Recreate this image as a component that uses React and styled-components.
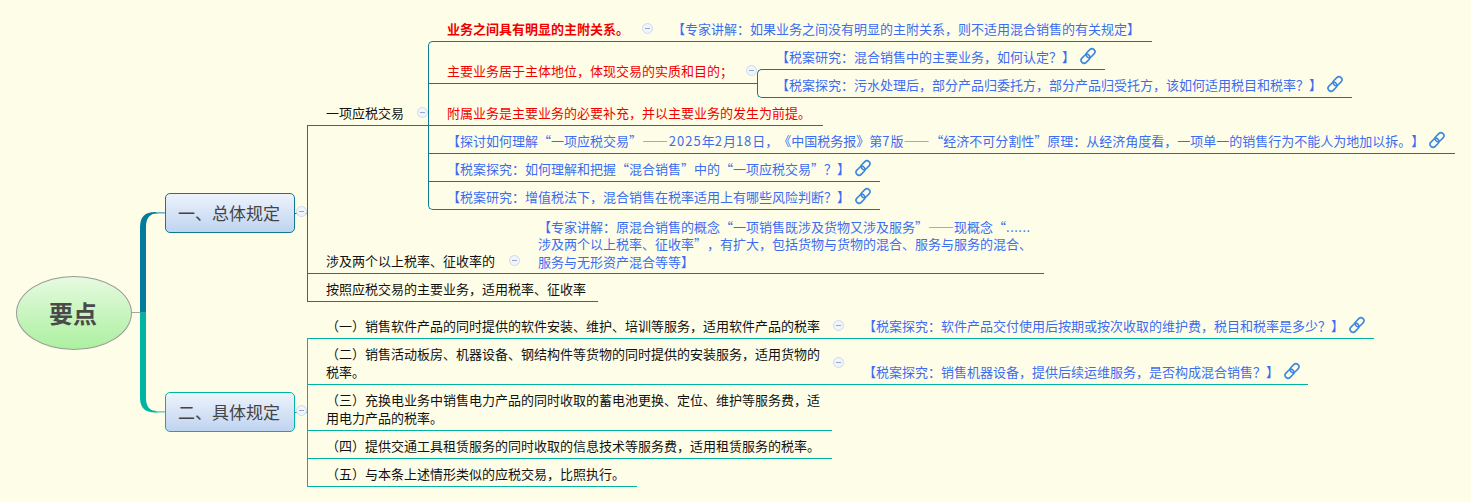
import React from "react";
import styled, { createGlobalStyle } from "styled-components";

const TEAL = "#0f7a8c";
const GREEN = "#00b4a2";

const GlobalStyle = createGlobalStyle`
  html, body {
    margin: 0;
    padding: 0;
    background: #fefee8;
  }
`;

const Canvas = styled.div`
  position: relative;
  width: 1471px;
  height: 502px;
  box-sizing: border-box;
  padding: 15px 0 0 165px;
  display: flex;
  flex-direction: column;
  gap: 12px;
  overflow: hidden;
  background: #fefee8;
  font-family: "Noto Sans CJK SC", "Noto Sans", sans-serif;
  font-size: 13px;
  line-height: 18px;
  color: #111;
  text-spacing-trim: space-all;
`;

// the root floats free of the two branches, it sits midway between them
const Root = styled.div`
  position: absolute;
  left: 16px;
  top: 276px;
  width: 116px;
  height: 74px;
  box-sizing: border-box;
  display: flex;
  align-items: center;
  justify-content: center;
  padding-right: 2px;
  border: 1px solid #9a9a9a;
  border-radius: 50%;
  background: linear-gradient(#e6fae0, #acf0a0);
  color: #4a4a4a;
  font-size: 24px;
  font-weight: 700;
`;

const Stem = styled.svg`
  position: absolute;
  left: 130px;
  top: 205px;
`;

const Section = styled.section`
  --line: ${(p) => p.$line};
  display: flex;
`;

const BranchSlot = styled.div`
  position: relative;
  flex: none;
  align-self: flex-end;
  width: 142px;
  height: ${(p) => p.$spine}px;
  display: flex;
  align-items: center;

  &::before {
    content: "";
    position: absolute;
    left: 130px;
    right: 0;
    top: 50%;
    height: 1px;
    background: var(--line);
  }
`;

const Branch = styled.div`
  flex: none;
  width: 130px;
  height: 40px;
  box-sizing: border-box;
  display: flex;
  align-items: center;
  justify-content: center;
  padding-right: 2px;
  border: 1px solid var(--line);
  border-radius: 5px;
  background: linear-gradient(#edf3fc, #bfd4f0);
  color: #444;
  font-size: 17px;
`;

const Column = styled.div`
  position: relative;
  display: flex;
  flex-direction: column;

  &::before {
    content: "";
    position: absolute;
    left: 0;
    top: ${(p) => p.$from}px;
    bottom: 0;
    border-left: 1px solid var(--line);
  }
`;

const Stack = styled.div`
  position: relative;
  flex: none;
  display: flex;
  flex-direction: column;

  &::before {
    content: "";
    position: absolute;
    left: 0;
    top: ${(p) => p.$from}px;
    bottom: 0;
    width: 6px;
    box-sizing: border-box;
    border: 1px solid var(--line);
    border-right: 0;
    border-radius: 5px 0 0 5px;
  }

  & > :first-child,
  & > :last-child {
    margin-left: 5px;
  }
`;

const Row = styled.div`
  display: flex;
  align-items: ${(p) => p.$align || "flex-end"};
  height: ${(p) => (p.$h ? `${p.$h}px` : "auto")};
`;

const tones = { note: "#3d6cf2", red: "#f20000", plain: "#111" };

const Node = styled.div`
  flex: none;
  width: ${(p) => p.$w}px;
  height: ${(p) => p.$h}px;
  box-sizing: border-box;
  display: flex;
  align-items: flex-end;
  padding: 0 0 3px ${(p) => (p.$pad === undefined ? 19 : p.$pad)}px;
  border-bottom: 1px solid var(--line);
  white-space: pre;
  color: ${(p) => tones[p.$tone || "plain"]};
  font-weight: ${(p) => (p.$bold ? 700 : 400)};
  line-height: ${(p) => p.$leading || 18}px;
`;

// latin digits and dashes run a little wider in the reference font
const Wide = styled.span`
  letter-spacing: ${(p) => p.$by || 1}px;
`;

const Minus = styled.span`
  flex: none;
  position: relative;
  width: 11px;
  height: 11px;
  box-sizing: border-box;
  margin: 0 ${(p) => p.$after || 0}px ${(p) => p.$lift || 4}px ${(p) => p.$before ?? 13}px;
  display: flex;
  align-items: center;
  justify-content: center;
  border: 1px solid #cfd9f2;
  border-radius: 50%;
  background: #f0f4fb;

  &::before {
    content: "";
    width: 5px;
    height: 1px;
    background: #93a6cc;
  }
`;

const ChainIcon = styled.svg`
  flex: none;
  margin: 0 0 1px 4px;
`;

function Chain() {
  return (
    <ChainIcon width="18" height="18" viewBox="0 0 18 18" fill="none" stroke="#3a86e0" strokeWidth="1.6">
      <rect x="8.5" y="1.2" width="6" height="10" rx="3" transform="rotate(45 11.5 6.2)" />
      <rect x="3.5" y="6.8" width="6" height="10" rx="3" transform="rotate(45 6.5 11.8)" />
    </ChainIcon>
  );
}

function Connectors() {
  return (
    <Stem width="40" height="215" viewBox="130 205 40 215">
      <path d="M132 312.5H146" stroke="#a5a5a0" fill="none" />
      <path d="M140 312.5V227Q140 212 155 212H158V213.5H157Q146 213.5 146 227V312.5Z" fill="#037c9c" />
      <path d="M156 212.8H165" stroke="#6fb6c0" strokeWidth="1.6" fill="none" />
      <path d="M140 312.5V398Q140 412.5 155 412.5H158V411H157Q146 411 146 398V312.5Z" fill={GREEN} />
      <path d="M156 411.8H165" stroke="#6cd6ca" strokeWidth="1.6" fill="none" />
    </Stem>
  );
}

export default function App() {
  return (
    <Canvas lang="zh-CN">
      <GlobalStyle />
      <Connectors />
      <Root>要点</Root>

      <Section $line={TEAL}>
        <BranchSlot $spine={178}>
          <Branch>一、总体规定</Branch>
          <Minus $before={1} />
        </BranchSlot>
        <Column $from={110}>
          <Row $align="center">
            <Node $w={121} $h={27}>
              一项应税交易
              <Minus />
            </Node>
            <Stack $from={26}>
              <Row $h={27}>
                <Node $w={239} $h={27} $pad={14} $tone="red" $bold>
                  业务之间具有明显的主附关系。
                  <Minus />
                </Node>
                <Node $w={480} $h={27} $pad={0} $tone="note">
                  【专家讲解：如果业务之间没有明显的主附关系，则不适用混合销售的有关规定】
                </Node>
              </Row>
              <Row $h={42} $align="flex-start">
                <Node $w={329} $h={42} $tone="red">
                  主要业务居于主体地位，体现交易的实质和目的；
                  <Minus />
                </Node>
                <Stack $from={27}>
                  <Node $w={343} $h={28} $pad={14} $tone="note">
                    【税案研究：混合销售中的主要业务，如何认定？】
                    <Chain />
                  </Node>
                  <Node $w={590} $h={28} $pad={14} $tone="note">
                    【税案探究：污水处理后，部分产品归委托方，部分产品归受托方，该如何适用税目和税率？】
                    <Chain />
                  </Node>
                </Stack>
              </Row>
              <Node $w={395} $h={42} $tone="red">
                附属业务是主要业务的必要补充，并以主要业务的发生为前提。
              </Node>
              <Node $w={1027} $h={28} $tone="note">
                <span>
                  【探讨如何理解“一项应税交易”<Wide $by={0.75}>——</Wide>
                  <Wide>2025</Wide>年<Wide>2</Wide>月<Wide>18</Wide>日，《中国税务报》第<Wide>7</Wide>版
                  <Wide $by={0.75}>——</Wide>“经济不可分割性”原理：从经济角度看，一项单一的销售行为不能人为地加以拆。】
                </span>
                <Chain />
              </Node>
              <Node $w={452} $h={28} $tone="note">
                【税案探究：如何理解和把握“混合销售”中的“一项应税交易”？】
                <Chain />
              </Node>
              <Node $w={447} $h={28} $pad={14} $tone="note">
                【税案研究：增值税法下，混合销售在税率适用上有哪些风险判断？】
                <Chain />
              </Node>
            </Stack>
          </Row>
          <Row>
            <Node $w={231} $h={64}>
              涉及两个以上税率、征收率的
              <Minus $before={14} />
            </Node>
            <Node $w={506} $h={64} $pad={0} $tone="note" $leading={17.5}>
              <span>
                【专家讲解：原混合销售的概念“一项销售既涉及货物又涉及服务”——现概念“<Wide $by={0.5}>......</Wide>
                {"\n涉及两个以上税率、征收率”，有扩大，包括货物与货物的混合、服务与服务的混合、\n服务与无形资产混合等等】"}
              </span>
            </Node>
          </Row>
          <Node $w={291} $h={28}>
            按照应税交易的主要业务，适用税率、征收率
          </Node>
        </Column>
      </Section>

      <Section $line={GREEN}>
        <BranchSlot $spine={150}>
          <Branch>二、具体规定</Branch>
          <Minus $before={1} />
        </BranchSlot>
        <Column $from={24}>
          <Row>
            <Node $w={525} $h={25}>
              （一）销售软件产品的同时提供的软件安装、维护、培训等服务，适用软件产品的税率
            </Node>
            <Node $w={542} $h={25} $pad={1} $tone="note">
              <Minus $before={0} $after={19} />
              【税案探究：软件产品交付使用后按期或按次收取的维护费，税目和税率是多少？】
              <Chain />
            </Node>
          </Row>
          <Row>
            <Node $w={525} $h={46}>
              {"（二）销售活动板房、机器设备、钢结构件等货物的同时提供的安装服务，适用货物的\n税率。"}
            </Node>
            <Node $w={476} $h={46} $pad={1} $tone="note">
              <Minus $before={0} $after={19} $lift={13} />
              【税案探究：销售机器设备，提供后续运维服务，是否构成混合销售？】
              <Chain />
            </Node>
          </Row>
          <Node $w={525} $h={46}>
            {"（三）充换电业务中销售电力产品的同时收取的蓄电池更换、定位、维护等服务费，适\n用电力产品的税率。"}
          </Node>
          <Node $w={525} $h={28}>
            （四）提供交通工具租赁服务的同时收取的信息技术等服务费，适用租赁服务的税率。
          </Node>
          <Node $w={330} $h={28}>
            （五）与本条上述情形类似的应税交易，比照执行。
          </Node>
        </Column>
      </Section>
    </Canvas>
  );
}
